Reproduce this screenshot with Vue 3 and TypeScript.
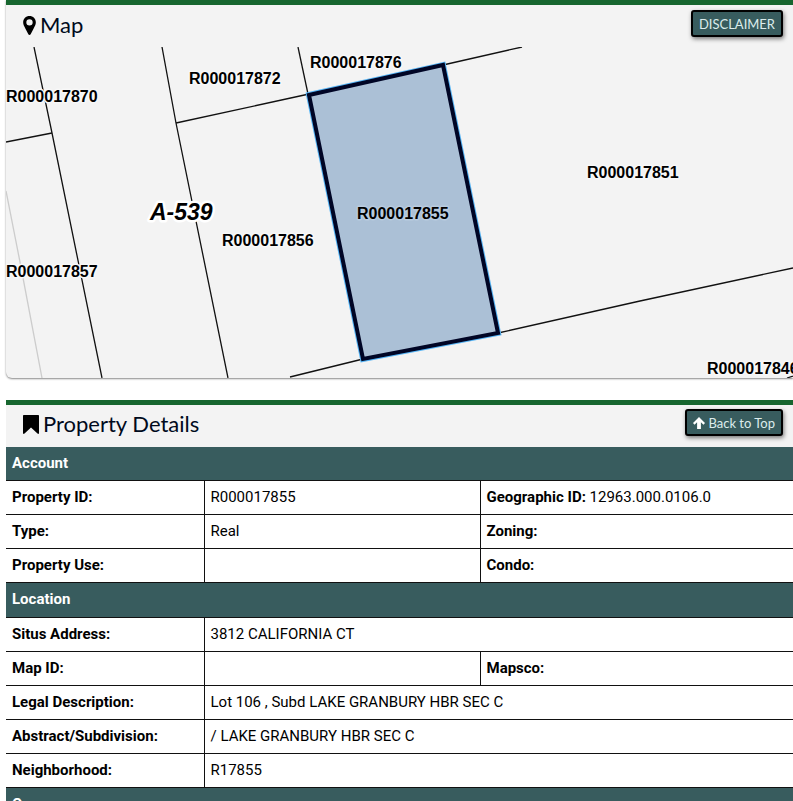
<script setup lang="ts">
interface Parcel {
  id: string
  x: number
  y: number
}

interface Row {
  label: string
  value: string
  extraLabel?: string
  extraValue?: string
}

interface Group {
  title: string
  rows: Row[]
}

const parcels: Parcel[] = [
  { id: 'R000017870', x: 6, y: 102 },
  { id: 'R000017872', x: 189, y: 84 },
  { id: 'R000017876', x: 310, y: 68 },
  { id: 'R000017851', x: 587, y: 178 },
  { id: 'R000017856', x: 222, y: 246 },
  { id: 'R000017857', x: 6, y: 277 },
  { id: 'R000017846', x: 707, y: 374 },
]

const groups: Group[] = [
  {
    title: 'Account',
    rows: [
      { label: 'Property ID:', value: 'R000017855', extraLabel: 'Geographic ID:', extraValue: '12963.000.0106.0' },
      { label: 'Type:', value: 'Real', extraLabel: 'Zoning:' },
      { label: 'Property Use:', value: '', extraLabel: 'Condo:' },
    ],
  },
  {
    title: 'Location',
    rows: [
      { label: 'Situs Address:', value: '3812 CALIFORNIA CT' },
      { label: 'Map ID:', value: '', extraLabel: 'Mapsco:' },
      { label: 'Legal Description:', value: 'Lot 106 , Subd LAKE GRANBURY HBR SEC C' },
      { label: 'Abstract/Subdivision:', value: '/ LAKE GRANBURY HBR SEC C' },
      { label: 'Neighborhood:', value: 'R17855' },
    ],
  },
  { title: 'Owner', rows: [] },
]

function backToTop(): void {
  window.scrollTo({ top: 0, behavior: 'smooth' })
}
</script>

<template>
  <main class="page">
    <section class="panel map-panel">
      <header class="panel-head">
        <h2>
          <svg class="icon-pin" viewBox="0 0 12 18" aria-hidden="true">
            <path fill-rule="evenodd" d="M6 0C2.600 0 0 2.600 0 6c0 2.400 1 3.600 2.300 6.300L4.900 17.300c.5.900 1.700.9 2.200 0l2.600-5C11 9.600 12 8.400 12 6c0-3.400-2.600-6-6-6zm0 3a3 3 0 1 1 0 6 3 3 0 0 1 0-6z" />
          </svg>
          <span>Map</span>
        </h2>
        <button type="button" class="btn">DISCLAIMER</button>
      </header>
      <svg class="map" viewBox="6 47 787 331" preserveAspectRatio="xMinYMin slice" role="img" aria-label="Parcel map">
        <path class="faint" d="M6 191L20 262L42 378" />
        <g class="lines">
          <path d="M34 47L52 133L102 378" />
          <path d="M6 142L52 133" />
          <path d="M162 47L176 123L228 378" />
          <path d="M176 123L309 94" />
          <path d="M298 47L308 94" />
          <path d="M443 65L522 47" />
          <path d="M290 377L363 359" />
          <path d="M498 333L640 301L793 268" />
          <path d="M787 378L793 376" />
        </g>
        <path class="parcel-glow" d="M309 95L443 65L498 333L363 359Z" />
        <path class="parcel" d="M309 95L443 65L498 333L363 359Z" />
        <text v-for="p in parcels" :key="p.id" class="label" :x="p.x" :y="p.y">{{ p.id }}</text>
        <text class="label selected" x="357" y="219">R000017855</text>
        <text class="abstract" x="150" y="220">A-539</text>
      </svg>
    </section>

    <section class="panel">
      <header class="panel-head details-head">
        <h2>
          <svg class="icon-bookmark" viewBox="0 0 16 19" aria-hidden="true">
            <path d="M1 0h14C15.600 0 16 .4 16 1V18c0 .9-.9 1.200-1.500.6L8 12.500l-6.500 6.100C.9 19.200 0 18.900 0 18V1C0 .4.4 0 1 0z" />
          </svg>
          <span>Property Details</span>
        </h2>
        <button type="button" class="btn" @click="backToTop">
          <svg class="icon-up" viewBox="0 0 12 12" aria-hidden="true">
            <path d="M6 0l6 6-1.500 1.700-2.600-2.500V12H4.100V5.200L1.500 7.700 0 6z" />
          </svg>
          <span>Back to Top</span>
        </button>
      </header>
      <table>
        <colgroup>
          <col class="col-label" />
          <col class="col-value" />
          <col />
        </colgroup>
        <tbody v-for="g in groups" :key="g.title">
          <tr class="band">
            <th colspan="3" scope="colgroup">{{ g.title }}</th>
          </tr>
          <tr v-for="r in g.rows" :key="r.label">
            <th scope="row">{{ r.label }}</th>
            <td :colspan="r.extraLabel ? 1 : 2">{{ r.value }}</td>
            <td v-if="r.extraLabel"><strong>{{ r.extraLabel }}</strong> {{ r.extraValue }}</td>
          </tr>
        </tbody>
      </table>
    </section>
  </main>
</template>

<style>
body {
  margin: 0;
  background: #fff;
}
</style>

<style scoped>
.page {
  box-sizing: border-box;
  height: 100vh;
  overflow: hidden;
  padding-left: 6px;
  display: flex;
  flex-direction: column;
  gap: 22px;
  font-family: Roboto, sans-serif;
  color: #000;
}

.panel {
  flex: none;
  border-top: 5px solid #17662f;
  background: #f3f3f3;
}

.map-panel {
  border-radius: 0 0 0 6px;
  box-shadow: 0 1px 2px #888;
}

.panel-head {
  box-sizing: border-box;
  height: 42px;
  padding: 5px 10px 10px 17px;
  display: flex;
  align-items: flex-start;
  justify-content: space-between;
}

.details-head {
  padding-top: 4px;
}

h2 {
  margin: 0;
  display: flex;
  align-items: center;
  gap: 4px;
  font: 400 22px/30px Lato, sans-serif;
  color: #000a1c;
}

h2 svg {
  fill: #000;
}

.icon-pin {
  width: 13px;
  height: 19px;
}

.icon-bookmark {
  width: 16px;
  height: 19px;
}

.icon-up {
  width: 12px;
  height: 12px;
  fill: #fff;
}

.btn {
  box-sizing: border-box;
  height: 27px;
  padding: 0 6px;
  display: flex;
  align-items: center;
  gap: 3px;
  border: 2px solid #000;
  border-radius: 3px;
  background: #385c5e;
  box-shadow: 1px 2px 4px #777;
  color: #dcecec;
  font: 400 13px/22px Lato, sans-serif;
  cursor: pointer;
}

.map {
  display: block;
  width: 100%;
  height: 331px;
}

.lines path {
  fill: none;
  stroke: #111;
  stroke-width: 1.3;
}

.faint {
  fill: none;
  stroke: #ccc;
  stroke-width: 1.3;
}

.parcel-glow {
  fill: none;
  stroke: #55b4f5;
  stroke-width: 6;
}

.parcel {
  fill: #abc0d6;
  stroke: #000525;
  stroke-width: 4;
}

.label {
  font: 700 16px "Liberation Sans", sans-serif;
  fill: #000;
  stroke: #f8f8f8;
  stroke-width: 3;
  stroke-linejoin: round;
  paint-order: stroke;
}

.selected {
  stroke: #b8cbdf;
}

.abstract {
  font: italic 700 23px "Liberation Sans", sans-serif;
  fill: #000;
  stroke: #fff;
  stroke-width: 5;
  stroke-linejoin: round;
  paint-order: stroke;
}

table {
  width: 100%;
  table-layout: fixed;
  border-collapse: collapse;
  background: #fff;
  font-size: 15px;
  line-height: 18px;
}

.col-label {
  width: 198px;
}

.col-value {
  width: 276px;
}

th,
td {
  box-sizing: border-box;
  height: 34px;
  padding: 7px 6px 8px;
  border: 1px solid #111;
  text-align: left;
  font-weight: 400;
}

th {
  font-weight: 700;
}

tr > :first-child {
  border-left: 0;
}

tr > :last-child {
  border-right: 0;
}

.band th {
  height: 35px;
  background: #385c5e;
  color: #fff;
}

tbody:first-of-type .band th {
  height: 33px;
  padding-bottom: 7px;
  border-top: 0;
}
</style>
